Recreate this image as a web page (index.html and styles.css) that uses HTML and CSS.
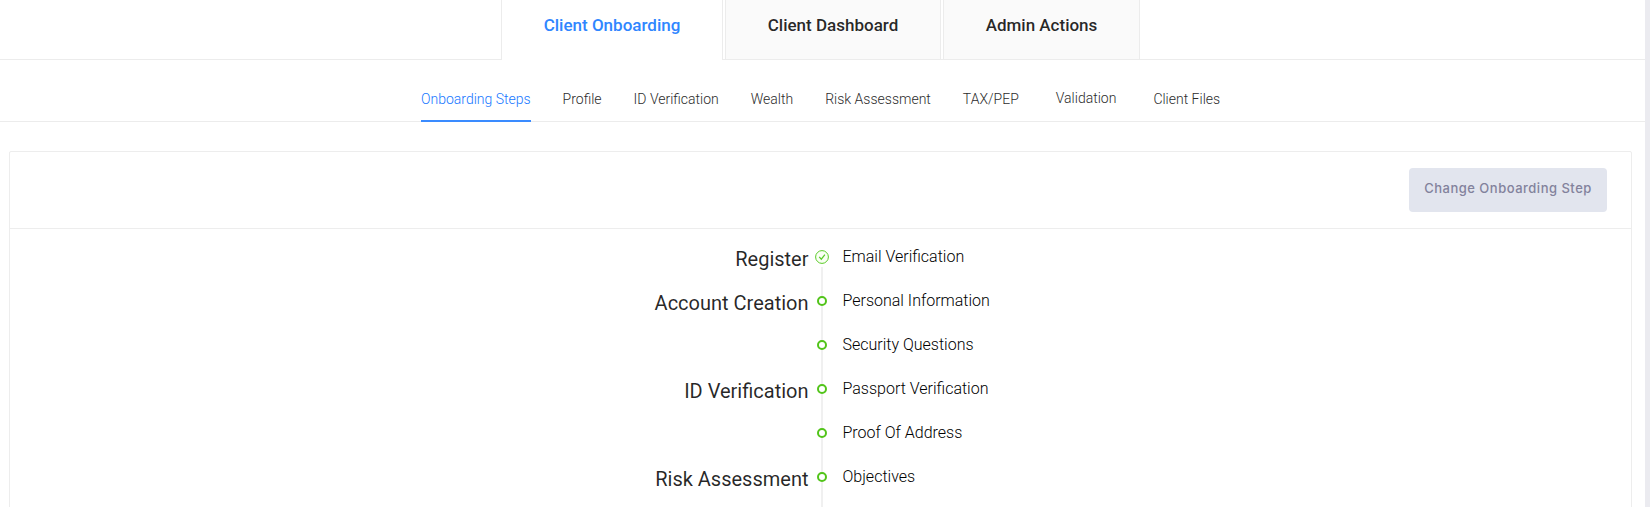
FILE: index.html
```html
<!DOCTYPE html>
<html lang="en">
<head>
<meta charset="utf-8">
<title>Client Onboarding</title>
<link rel="stylesheet" href="styles.css">
</head>
<body>
<main class="page">
  <nav class="tabs">
    <a class="tab tab-active tab-first">Client Onboarding</a>
    <a class="tab tab-second">Client Dashboard</a>
    <a class="tab tab-third">Admin Actions</a>
  </nav>
  <nav class="subtabs">
    <a class="subtab subtab-active">Onboarding Steps</a>
    <a class="subtab">Profile</a>
    <a class="subtab">ID Verification</a>
    <a class="subtab">Wealth</a>
    <a class="subtab">Risk Assessment</a>
    <a class="subtab">TAX/PEP</a>
    <a class="subtab subtab-padded">Validation</a>
    <a class="subtab">Client Files</a>
  </nav>
  <section class="card">
    <header class="card-head"><button class="button">Change Onboarding Step</button></header>
    <ul class="timeline">
      <li class="step step-done">
        <span class="label">Register</span>
        <span class="marker"><svg class="check" viewBox="0 0 14 14"><circle cx="7" cy="7" r="6.4"/><path d="M4.2 6.9 6.3 9.2 9.9 4.6"/></svg></span>
        <span class="text">Email Verification</span>
      </li>
      <li class="step"><span class="label">Account Creation</span><span class="marker"><i class="dot"></i></span><span class="text">Personal Information</span></li>
      <li class="step"><span class="label"></span><span class="marker"><i class="dot"></i></span><span class="text">Security Questions</span></li>
      <li class="step"><span class="label">ID Verification</span><span class="marker"><i class="dot"></i></span><span class="text">Passport Verification</span></li>
      <li class="step"><span class="label"></span><span class="marker"><i class="dot"></i></span><span class="text">Proof Of Address</span></li>
      <li class="step"><span class="label">Risk Assessment</span><span class="marker"><i class="dot"></i></span><span class="text">Objectives</span></li>
    </ul>
  </section>
</main>
</body>
</html>
```
FILE: styles.css
```css
* { box-sizing: border-box; }
body {
  margin: 0;
  height: 507px;
  overflow: hidden;
  background: #ebebf0;
  font-family: Roboto, "Liberation Sans", sans-serif;
  color: rgba(0, 0, 0, 0.85);
}
.page { width: 1645px; height: 507px; overflow: hidden; background: #fff; }
.tabs {
  display: flex;
  justify-content: center;
  gap: 2px;
  height: 60px;
  padding-right: 4px;
  border-bottom: 1px solid #ececec;
}
.tab {
  height: 59px;
  padding-top: 13px;
  border: solid #ececec;
  border-width: 0 1px;
  background: #fafafa;
  font-size: 17px;
  font-weight: 500;
  line-height: 24px;
  text-align: center;
  white-space: nowrap;
}
.tab-first { width: 222px; }
.tab-second { width: 216px; }
.tab-third { width: 197px; }
.tab-active { height: 60px; background: #fff; color: #2f86ff; }
.subtabs {
  display: flex;
  gap: 32px;
  height: 62px;
  padding: 27px 0 0 421px;
  border-bottom: 1px solid #ececec;
}
.subtab {
  height: 35px;
  font-size: 14px;
  font-weight: 300;
  line-height: 24px;
  color: #2c2c2c;
  white-space: nowrap;
}
.subtab-active { border-bottom: 2px solid #3a8bff; color: #1677ff; }
.subtab-padded { padding: 0 5px; line-height: 22px; }
.card {
  width: 1623px;
  height: 400px;
  margin: 29px 0 0 9px;
  border: 1px solid #ededed;
  border-radius: 2px;
}
.card-head {
  display: flex;
  justify-content: flex-end;
  height: 77px;
  padding: 16px 24px 0 0;
  border-bottom: 1px solid #ededed;
}
.button {
  width: 198px;
  height: 44px;
  padding: 0 0 4px;
  border: 0;
  border-radius: 4px;
  background: #e2e5ee;
  color: #82829c;
  font: 500 13px Inter, sans-serif;
  letter-spacing: 0.5px;
  white-space: nowrap;
}
.timeline { margin: 0; padding: 16px 0 0; list-style: none; }
.step { display: grid; grid-template-columns: 798.5px 27px 1fr; height: 44px; }
.label {
  padding-top: 2px;
  font-size: 20px;
  line-height: 24px;
  text-align: right;
}
.marker {
  display: flex;
  flex-direction: column;
  align-items: center;
  height: 51px;
  padding-top: 7px;
}
.marker::after { content: ""; flex: 1; width: 2px; background: #f0f0f0; }
.dot {
  width: 10px;
  height: 10px;
  border: 2px solid #52c41a;
  border-radius: 50%;
  background: #fff;
}
.step-done .marker { padding-top: 5px; }
.check {
  width: 14px;
  height: 14px;
  margin-bottom: 3px;
  fill: #f9fff4;
  stroke: #5acb28;
}
.check path { fill: none; stroke-width: 1.2; }
.text {
  padding-left: 7px;
  font-size: 16px;
  font-weight: 300;
  line-height: 24px;
  color: #000;
}
```
